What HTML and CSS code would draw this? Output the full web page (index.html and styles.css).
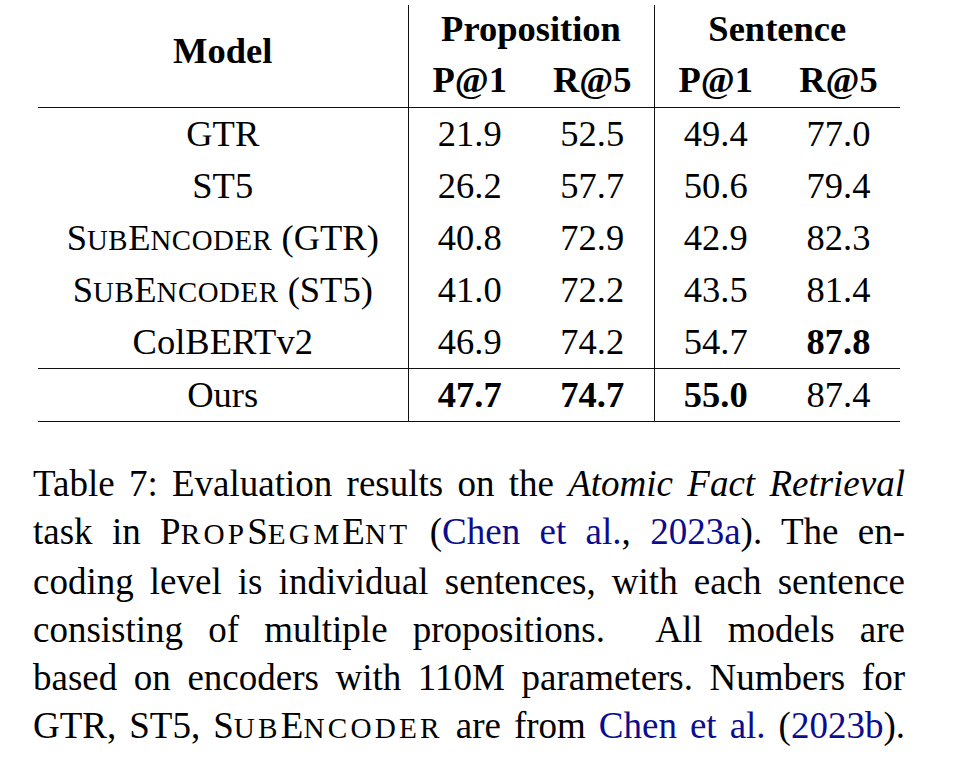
FILE: index.html
```html
<!DOCTYPE html>
<html>
<head>
<meta charset="utf-8">
<link rel="stylesheet" href="styles.css">
</head>
<body>
<div class="page">
  <table class="results">
    <colgroup>
      <col class="c-model"><col class="c-num"><col class="c-num"><col class="c-num"><col class="c-num">
    </colgroup>
    <thead>
      <tr class="h1">
        <th rowspan="2" class="model-h">Model</th>
        <th colspan="2" class="vsep">Proposition</th>
        <th colspan="2" class="vsep">Sentence</th>
      </tr>
      <tr class="h2">
        <th class="vsep">P@1</th><th>R@5</th>
        <th class="vsep">P@1</th><th>R@5</th>
      </tr>
    </thead>
    <tbody>
      <tr><td>GTR</td><td class="vsep">21.9</td><td>52.5</td><td class="vsep">49.4</td><td>77.0</td></tr>
      <tr><td>ST5</td><td class="vsep">26.2</td><td>57.7</td><td class="vsep">50.6</td><td>79.4</td></tr>
      <tr><td>S<span class="s">ub</span>E<span class="s">ncoder</span> (GTR)</td><td class="vsep">40.8</td><td>72.9</td><td class="vsep">42.9</td><td>82.3</td></tr>
      <tr><td>S<span class="s">ub</span>E<span class="s">ncoder</span> (ST5)</td><td class="vsep">41.0</td><td>72.2</td><td class="vsep">43.5</td><td>81.4</td></tr>
      <tr class="last-base"><td>ColBERTv2</td><td class="vsep">46.9</td><td>74.2</td><td class="vsep">54.7</td><td><b>87.8</b></td></tr>
      <tr class="ours"><td>Ours</td><td class="vsep"><b>47.7</b></td><td><b>74.7</b></td><td class="vsep"><b>55.0</b></td><td>87.4</td></tr>
    </tbody>
  </table>
  <div class="caption">
    <div class="line">Table 7: Evaluation results on the <i>Atomic Fact Retrieval</i></div>
    <div class="line">task in P<span class="s">rop</span>S<span class="s">egm</span>E<span class="s">nt</span> (<span class="link">Chen et al.</span>, <span class="link">2023a</span>). The en-</div>
    <div class="line">coding level is individual sentences, with each sentence</div>
    <div class="line">consisting of multiple propositions. &nbsp;All models are</div>
    <div class="line">based on encoders with 110M parameters. Numbers for</div>
    <div class="line">GTR, ST5, S<span class="s">ub</span>E<span class="s">ncoder</span> are from <span class="link">Chen et al.</span> (<span class="link">2023b</span>).</div>
  </div>
</div>
</body>
</html>
```

FILE: styles.css
```css
html, body {
  margin: 0;
  padding: 0;
  background: #ffffff;
}

body {
  font-family: "Liberation Serif", "Times New Roman", serif;
  color: #000000;
  width: 955px;
  height: 777px;
  overflow: hidden;
}

.page {
  padding-top: 5px;
}

.results {
  margin-left: 38px;
  border-collapse: collapse;
  font-size: 36.5px;
  table-layout: fixed;
  width: 862px;
}

.c-model { width: 370px; }
.c-num { width: 123px; }

.results th,
.results td {
  padding: 0;
  text-align: center;
  white-space: nowrap;
  line-height: 1;
}

.results th {
  font-weight: bold;
}

.h1 th { height: 49px; }
.h2 th { height: 53px; border-bottom: 1.5px solid #111; }
.model-h {
  border-bottom: 1.5px solid #111;
  padding-bottom: 10px !important;
}

.results tbody td { height: 52px; }

.results .vsep {
  border-left: 1.5px solid #111;
}

.last-base td { border-bottom: 1.5px solid #111; }
.ours td { border-bottom: 1.5px solid #111; }

/* hand-made small capitals, wider than synthesized ones */
.s {
  text-transform: uppercase;
  font-size: 0.79em;
  letter-spacing: 0.11em;
}

.results .s {
  letter-spacing: 0.02em;
}

.caption {
  margin-top: 38px;
  margin-left: 33px;
  width: 872px;
  font-size: 37px;
  line-height: 48px;
}

.line {
  text-align: justify;
  text-align-last: justify;
  white-space: nowrap;
}

.link {
  color: #0c0c90;
}
```
